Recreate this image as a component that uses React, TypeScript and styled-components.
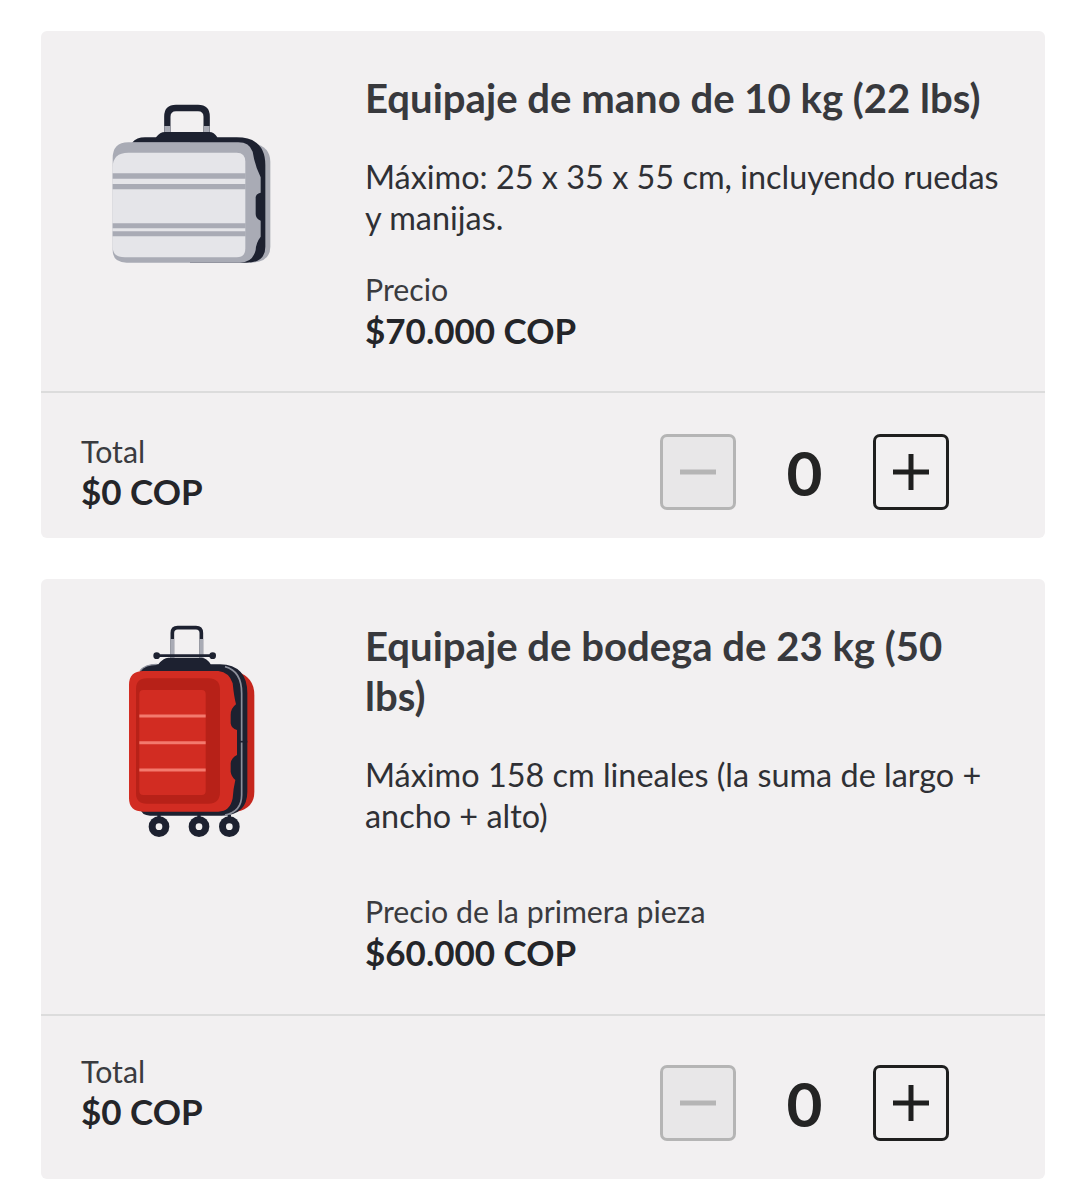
import React from "react";
import styled, { createGlobalStyle } from "styled-components";

const GlobalStyle = createGlobalStyle`
  body {
    margin: 0;
    background: #fff;
    font-family: "Lato", "Liberation Sans", sans-serif;
  }
`;

const CabinBag = () => (
  <svg width="200" height="190" viewBox="0 0 600 570">
    <path d="M232 128V80Q232 54 258 54H324Q350 54 350 80V128" fill="none" stroke="#1d2130" strokeWidth="19" />
    <path d="M223 108h18v20h-18zM341 108h18v20h-18z" fill="#a9abb5" />
    <path d="M470 158Q540 160 541 215V470Q541 518 480 518Z" fill="#a9abb5" />
    <path
      d="M126 158Q140 142 165 142H198Q210 126 225 126H358Q372 126 382 142H440Q526 142 526 225V470Q526 518 470 518H300V158Z"
      fill="#1d2130"
    />
    <path
      d="M115 157H445Q478 157 488 185Q494 225 512 262V308Q497 312 497 322V372Q497 386 512 392V440Q498 458 497 480Q488 518 450 518H110Q68 518 68 480V205Q68 157 115 157Z"
      fill="#a9abb5"
    />
    <path d="M115 188H440Q466 188 466 215V475Q466 502 440 502H105Q68 502 68 470V232Q68 188 115 188Z" fill="#e5e5e9" />
    <path d="M68 250h399v16H68zM68 282h399v16H68zM68 400h399v15H68zM68 424h399v15H68z" fill="#a9abb5" />
  </svg>
);

const CheckedBag = () => (
  <svg width="160" height="230" viewBox="0 0 480 690">
    <path d="M187 135V54Q187 38 203 38H258Q274 38 274 54V135" fill="none" stroke="#1d2130" strokeWidth="11" />
    <path d="M187 72V135M274 72V135" stroke="#a9abb5" strokeWidth="11" />
    <path d="M140 122H308" stroke="#1d2130" strokeWidth="8" />
    <circle cx="140" cy="122" r="10" fill="#1d2130" />
    <circle cx="308" cy="122" r="10" fill="#1d2130" />
    <path d="M380 170Q433 185 433 240V530Q433 580 380 590Z" fill="#c6261d" />
    <path
      d="M90 168Q105 148 140 148H145Q160 128 175 128H275Q290 128 302 148H330Q412 150 412 235V530Q412 600 335 602H120Q95 602 90 580Z"
      fill="#1d2130"
    />
    <path d="M90 168Q105 148 140 148" fill="none" stroke="#8d909c" strokeWidth="4" />
    <path d="M345 155Q395 168 395 235V540Q395 590 345 600" fill="none" stroke="#8d909c" strokeWidth="5" />
    <path d="M388 380h24" stroke="#1d2130" strokeWidth="5" />
    <path
      d="M100 168H325Q358 172 368 205Q372 245 378 268Q362 280 362 300V325Q364 340 381 345V420Q364 428 362 445V470Q364 485 376 495Q370 520 368 550Q360 590 325 590H100Q57 590 57 550V210Q57 168 100 168Z"
      fill="#d22c22"
    />
    <path d="M110 190H295Q330 190 330 225V530Q330 566 295 566H110Q78 566 78 535V222Q78 190 110 190Z" fill="#b72118" />
    <path d="M100 225H275Q287 225 287 237V528Q287 540 275 540H100Q88 540 88 528V237Q88 225 100 225Z" fill="#d22c22" />
    <path d="M88 303H287M88 383H287M88 465H287" stroke="#f37a6e" strokeWidth="9" />
    <path d="M147 600v12M267 600v12M358 600v12" stroke="#1d2130" strokeWidth="10" />
    {[147, 267, 358].map((cx) => (
      <g key={cx}>
        <circle cx={cx} cy="635" r="31" fill="#1d2130" />
        <circle cx={cx} cy="635" r="10" fill="#f2f0f1" />
      </g>
    ))}
  </svg>
);

type BagData = {
  title: string;
  description: string;
  priceLabel: string;
  price: string;
  art: React.ReactNode;
  artTop: number;
  priceGap: number;
  detailsBottom: number;
  totalTop: number;
  stepperTop: number;
  footerBottom: number;
};

const bags: BagData[] = [
  {
    title: "Equipaje de mano de 10 kg (22 lbs)",
    description: "Máximo: 25 x 35 x 55 cm, incluyendo ruedas y manijas.",
    priceLabel: "Precio",
    price: "$70.000 COP",
    art: <CabinBag />,
    artTop: 17,
    priceGap: 31,
    detailsBottom: 40,
    totalTop: 38,
    stepperTop: 41,
    footerBottom: 26,
  },
  {
    title: "Equipaje de bodega de 23 kg (50 lbs)",
    description: "Máximo 158 cm lineales (la suma de largo + ancho + alto)",
    priceLabel: "Precio de la primera pieza",
    price: "$60.000 COP",
    art: <CheckedBag />,
    artTop: -6,
    priceGap: 55,
    detailsBottom: 41,
    totalTop: 35,
    stepperTop: 49,
    footerBottom: 38,
  },
];

const App = () => {
  return (
    <Page>
      <GlobalStyle />
      {bags.map((bag) => (
        <Card key={bag.title}>
          <Details $bottom={bag.detailsBottom}>
            <Art $top={bag.artTop}>{bag.art}</Art>
            <Info>
              <Title>{bag.title}</Title>
              <Description>{bag.description}</Description>
              <PriceBlock $gap={bag.priceGap}>
                <Label>{bag.priceLabel}</Label>
                <Amount>{bag.price}</Amount>
              </PriceBlock>
            </Info>
          </Details>
          <Footer $bottom={bag.footerBottom}>
            <TotalBlock $top={bag.totalTop}>
              <Label>Total</Label>
              <Amount>$0 COP</Amount>
            </TotalBlock>
            <Stepper $top={bag.stepperTop}>
              <StepButton disabled aria-label="Quitar">
                <svg width="38" height="38" viewBox="0 0 38 38">
                  <path d="M1 19H37" stroke="#b5b5b5" strokeWidth="5" />
                </svg>
              </StepButton>
              <Count>0</Count>
              <StepButton aria-label="Agregar">
                <svg width="38" height="38" viewBox="0 0 38 38">
                  <path d="M1 19H37M19 1V37" stroke="#1f1f1f" strokeWidth="5" />
                </svg>
              </StepButton>
            </Stepper>
          </Footer>
        </Card>
      ))}
    </Page>
  );
};

const Page = styled.div`
  width: 1004px;
  padding: 31px 40px 22px 41px;
  display: flex;
  flex-direction: column;
  gap: 41px;
`;

const Card = styled.section`
  background: #f2f0f1;
  border-radius: 6px;
`;

const Details = styled.div<{ $bottom: number }>`
  display: grid;
  grid-template-columns: 298px 1fr;
  column-gap: 26px;
  padding: 42px 40px ${(p) => p.$bottom}px 0;
  border-bottom: 2px solid #dcdcdc;
`;

const Art = styled.div<{ $top: number }>`
  display: flex;
  justify-content: center;
  align-items: flex-start;
  margin-top: ${(p) => p.$top}px;
`;

const Info = styled.div`
  color: #2f3035;
`;

const Title = styled.h2`
  margin: 0 0 33px;
  font-size: 40.1px;
  line-height: 50px;
  font-weight: 700;
  color: #38393d;
`;

const Description = styled.p`
  margin: 0;
  font-size: 32.4px;
  line-height: 41px;
`;

const PriceBlock = styled.div<{ $gap: number }>`
  margin-top: ${(p) => p.$gap}px;
`;

const Label = styled.div`
  font-size: 30.3px;
  line-height: 41px;
  color: #3a3b3f;
`;

const Amount = styled.div`
  font-size: 35px;
  line-height: 41px;
  font-weight: 700;
  color: #242529;
`;

const Footer = styled.div<{ $bottom: number }>`
  display: flex;
  justify-content: space-between;
  align-items: flex-start;
  padding: 0 96px ${(p) => p.$bottom}px 40px;
`;

const TotalBlock = styled.div<{ $top: number }>`
  margin-top: ${(p) => p.$top}px;

  ${Label} {
    line-height: 40px;
  }
`;

const Stepper = styled.div<{ $top: number }>`
  display: flex;
  align-items: center;
  gap: 50px;
  margin-top: ${(p) => p.$top}px;
`;

const StepButton = styled.button`
  width: 76px;
  height: 76px;
  padding: 0;
  box-sizing: border-box;
  display: flex;
  align-items: center;
  justify-content: center;
  background: transparent;
  border: 3px solid #1f1f1f;
  border-radius: 7px;

  &:disabled {
    background: #e8e7e8;
    border-color: #b5b5b5;
  }
`;

const Count = styled.span`
  width: 37px;
  font-size: 62px;
  line-height: 76px;
  font-weight: 700;
  text-align: center;
  color: #242424;
  display: flex;
  justify-content: center;
`;

export default App;
